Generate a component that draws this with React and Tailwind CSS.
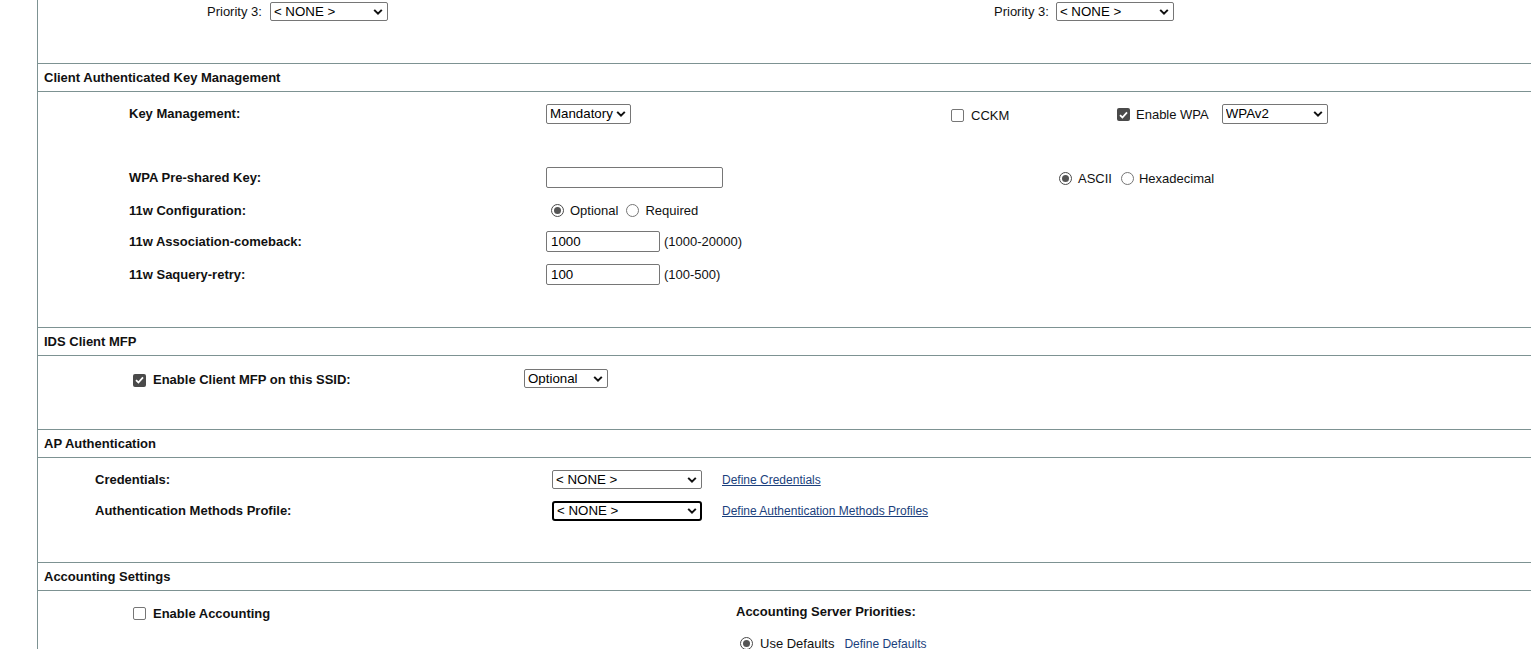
import { useState } from 'react';

const font = "font-['Liberation_Sans',Arial,sans-serif]";

function Chevron() {
  return (
    <svg className="pointer-events-none absolute right-[5px] top-1/2 -translate-y-1/2" width="10" height="7" viewBox="0 0 10 7">
      <path d="M1.2 1.4 L5 5.2 L8.8 1.4" fill="none" stroke="#111" strokeWidth="2" />
    </svg>
  );
}

function Select({ value, width, height = 'h-[19px]', focused = false }) {
  return (
    <span className={`relative inline-block ${width} ${height}`}>
      <select
        defaultValue={value}
        className={`${font} block h-full w-full appearance-none bg-white pr-[14px] text-[13.3px] leading-none text-black outline-none ${
          focused ? 'rounded-[3px] border-2 border-black pl-[3px]' : 'rounded-[2px] border border-[#767676] pl-[3px]'
        }`}
      >
        <option>{value}</option>
      </select>
      <Chevron />
    </span>
  );
}

function Box({ checked }) {
  return checked ? (
    <span className="inline-flex h-[13px] w-[13px] items-center justify-center rounded-[2px] bg-[#4a4a4a]">
      <svg width="9" height="8" viewBox="0 0 9 8">
        <path d="M1 4.2 L3.4 6.5 L8 1.3" fill="none" stroke="#fff" strokeWidth="1.8" />
      </svg>
    </span>
  ) : (
    <span className="inline-block h-[13px] w-[13px] rounded-[2px] border border-[#767676] bg-white" />
  );
}

function Radio({ checked }) {
  return (
    <span
      className={`inline-flex h-[13px] w-[13px] items-center justify-center rounded-full border bg-white ${
        checked ? 'border-[#4a4a4a]' : 'border-[#767676]'
      }`}
    >
      {checked && <span className="h-[7px] w-[7px] rounded-full bg-[#555]" />}
    </span>
  );
}

function TextBox({ value = '', width }) {
  return (
    <input
      defaultValue={value}
      className={`${font} ${width} h-[21px] rounded-[2px] border border-[#767676] bg-white px-[4px] text-[13.3px] text-black outline-none`}
    />
  );
}

function Header({ children }) {
  return (
    <div className="flex h-[29px] items-center border-y border-[#7d9292] pl-[6px] text-[13px] font-bold text-[#111]">
      {children}
    </div>
  );
}

function Link({ children }) {
  return <a href="#" className="text-[12px] text-[#1b3f7d] underline">{children}</a>;
}

export default function App() {
  const [, setTick] = useState(0);

  return (
    <div className={`${font} min-h-screen bg-white text-[13px] text-[#111]`} onClick={() => setTick((t) => t + 1)}>
      <div className="ml-[37px] min-h-[649px] border-l border-[#7d9292]">
        {/* tail of the previous section: third priority pickers */}
        <div className="flex h-[63px] pt-[2px]">
          <div className="flex w-[956px] items-start pl-[169px]">
            <span className="mr-[8px]">Priority 3:</span>
            <Select value="< NONE >" width="w-[118px]" />
          </div>
          <div className="flex items-start">
            <span className="mr-[7px]">Priority 3:</span>
            <Select value="< NONE >" width="w-[118px]" />
          </div>
        </div>

        <Header>Client Authenticated Key Management</Header>
        <div className="h-[235px] pt-[12px]">
          <div className="flex h-[20px] items-center">
            <span className="w-[508px] pl-[91px] font-bold">Key Management:</span>
            <Select value="Mandatory" width="w-[85px]" height="h-[20px]" />
            <span className="ml-[320px] flex w-[166px] items-center gap-[7px] pt-[3px]">
              <Box /> CCKM
            </span>
            <span className="flex items-center gap-[6px] pt-[1px]">
              <Box checked /> Enable WPA
            </span>
            <span className="ml-[13px]">
              <Select value="WPAv2" width="w-[106px]" height="h-[20px]" />
            </span>
          </div>

          <div className="mt-[43px] flex h-[21px] items-center">
            <span className="w-[508px] pl-[91px] font-bold">WPA Pre-shared Key:</span>
            <TextBox width="w-[177px]" />
            <span className="ml-[336px] flex items-center gap-[6px] pt-[2px]">
              <Radio checked /> ASCII
            </span>
            <span className="ml-[9px] flex items-center gap-[5px] pt-[2px]">
              <Radio /> Hexadecimal
            </span>
          </div>

          <div className="mt-[12px] flex h-[20px] items-center pt-[1px]">
            <span className="w-[508px] pl-[91px] font-bold">11w Configuration:</span>
            <span className="ml-[5px] flex items-center gap-[6px]">
              <Radio checked /> Optional
            </span>
            <span className="ml-[8px] flex items-center gap-[6px]">
              <Radio /> Required
            </span>
          </div>

          <div className="mt-[11px] flex h-[21px] items-center">
            <span className="w-[508px] pl-[91px] font-bold">11w Association-comeback:</span>
            <TextBox value="1000" width="w-[114px]" />
            <span className="ml-[4px]">(1000-20000)</span>
          </div>

          <div className="mt-[12px] flex h-[21px] items-center">
            <span className="w-[508px] pl-[91px] font-bold">11w Saquery-retry:</span>
            <TextBox value="100" width="w-[114px]" />
            <span className="ml-[4px]">(100-500)</span>
          </div>
        </div>

        <Header>IDS Client MFP</Header>
        <div className="h-[73px] pt-[13px]">
          <div className="flex h-[19px] items-center">
            <span className="flex w-[486px] items-center gap-[7px] pl-[95px] pt-[3px] font-bold">
              <Box checked /> Enable Client MFP on this SSID:
            </span>
            <Select value="Optional" width="w-[84px]" height="h-[19px]" />
          </div>
        </div>

        <Header>AP Authentication</Header>
        <div className="h-[104px] pt-[12px]">
          <div className="flex h-[19px] items-center">
            <span className="w-[514px] pl-[57px] font-bold">Credentials:</span>
            <Select value="< NONE >" width="w-[150px]" />
            <span className="ml-[20px]">
              <Link>Define Credentials</Link>
            </span>
          </div>
          <div className="mt-[12px] flex h-[20px] items-center">
            <span className="w-[514px] pl-[57px] font-bold">Authentication Methods Profile:</span>
            <Select value="< NONE >" width="w-[150px]" height="h-[20px]" focused />
            <span className="ml-[20px]">
              <Link>Define Authentication Methods Profiles</Link>
            </span>
          </div>
        </div>

        <Header>Accounting Settings</Header>
        <div className="flex pt-[11px]">
          <div className="w-[698px] pl-[95px]">
            <span className="flex items-center gap-[7px] pt-[2px] font-bold">
              <Box /> Enable Accounting
            </span>
          </div>
          <div>
            <div className="font-bold">Accounting Server Priorities:</div>
            <div className="mt-[12px] flex items-center pl-[4px]">
              <Radio checked />
              <span className="ml-[7px]">Use Defaults</span>
              <span className="ml-[10px]">
                <Link>Define Defaults</Link>
              </span>
            </div>
          </div>
        </div>
      </div>
    </div>
  );
}
